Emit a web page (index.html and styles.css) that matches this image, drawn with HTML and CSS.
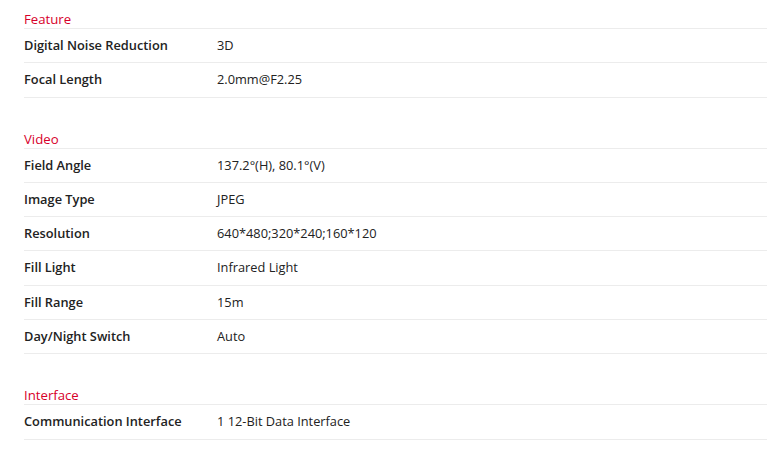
FILE: index.html
```html
<!DOCTYPE html>
<html>
<head>
<meta charset="utf-8">
<link rel="stylesheet" href="styles.css">
</head>
<body>
<div class="specs">
  <section class="group">
    <h3 class="group-title">Feature</h3>
    <div class="row"><div class="label">Digital Noise Reduction</div><div class="value">3D</div></div>
    <div class="row"><div class="label">Focal Length</div><div class="value">2.0mm@F2.25</div></div>
  </section>
  <section class="group">
    <h3 class="group-title">Video</h3>
    <div class="row"><div class="label">Field Angle</div><div class="value">137.2°(H), 80.1°(V)</div></div>
    <div class="row"><div class="label">Image Type</div><div class="value">JPEG</div></div>
    <div class="row"><div class="label">Resolution</div><div class="value">640*480;320*240;160*120</div></div>
    <div class="row"><div class="label">Fill Light</div><div class="value">Infrared Light</div></div>
    <div class="row"><div class="label">Fill Range</div><div class="value">15m</div></div>
    <div class="row"><div class="label">Day/Night Switch</div><div class="value">Auto</div></div>
  </section>
  <section class="group">
    <h3 class="group-title">Interface</h3>
    <div class="row"><div class="label">Communication Interface</div><div class="value">1 12-Bit Data Interface</div></div>
  </section>
</div>
</body>
</html>
```
FILE: styles.css
```css
html, body {
  margin: 0;
  padding: 0;
  background: #fff;
}
body {
  font-family: "Open Sans", "Liberation Sans", sans-serif;
  font-size: 12.8px;
  color: #222;
}
.specs {
  padding: 10px 3px 0 24px;
}
.group + .group {
  margin-top: 32px;
}
.group-title {
  margin: 0;
  font-size: 13.2px;
  font-weight: 400;
  color: #d7002a;
  line-height: 18px;
  border-bottom: 1px solid #ececec;
}
.row {
  display: grid;
  grid-template-columns: 193px 1fr;
  padding: 8px 0;
  line-height: 17.3px;
  border-bottom: 1px solid #ececec;
}
.label {
  font-weight: 600;
}
.value {
  font-weight: 400;
}
```
